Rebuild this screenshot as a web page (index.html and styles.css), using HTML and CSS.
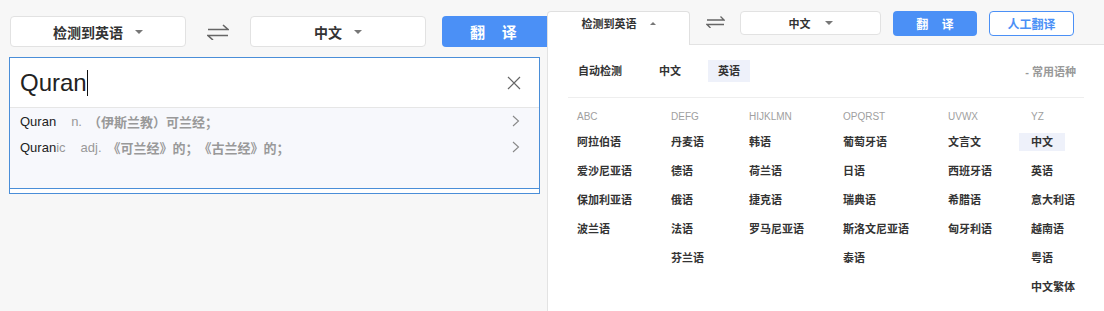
FILE: index.html
```html
<!DOCTYPE html>
<html lang="zh-CN">
<head>
    <meta charset="UTF-8">
    <meta name="viewport" content="width=device-width, initial-scale=1.0">
    <title>翻译</title>
    <link rel="stylesheet" href="styles.css">
</head>
<body>
    <div class="page">
        <!-- left: input side -->
        <div class="left">
            <div class="topbar">
                <div class="select">检测到英语 <span class="caret"></span></div>
                <div class="swap">
                    <svg width="22" height="16" viewBox="0 0 22 16"><path d="M1 5.5h20L16 1M21 11.5H1l5 4.5" fill="none" stroke="#666" stroke-width="1.6"/></svg>
                </div>
                <div class="select">中文 <span class="caret"></span></div>
                <button class="btn-main">翻&nbsp;&nbsp;&nbsp;&nbsp;译</button>
            </div>

            <div class="input-box">
                <div class="input-row">
                    <span class="input-text">Quran</span><span class="cursor"></span>
                    <svg class="close" width="14" height="14" viewBox="0 0 14 14"><path d="M1 1l12 12M13 1L1 13" stroke="#666" stroke-width="1.2"/></svg>
                </div>
                <div class="suggest">
                    <div class="suggest-row">
                        <span class="word">Quran</span>
                        <span class="pos">n.</span>
                        <span class="mean">（伊斯兰教）可兰经；</span>
                        <svg class="chev" width="8" height="12" viewBox="0 0 8 12"><path d="M1 1l5.5 5L1 11" fill="none" stroke="#888" stroke-width="1.1"/></svg>
                    </div>
                    <div class="suggest-row">
                        <span class="word">Quran<span class="rest">ic</span></span>
                        <span class="pos">adj.</span>
                        <span class="mean">《可兰经》的；《古兰经》的；</span>
                        <svg class="chev" width="8" height="12" viewBox="0 0 8 12"><path d="M1 1l5.5 5L1 11" fill="none" stroke="#888" stroke-width="1.1"/></svg>
                    </div>
                </div>
            </div>
        </div>

        <!-- right: language dropdown -->
        <div class="right">
            <div class="head">
                <div class="tab">检测到英语 <span class="caret up"></span></div>
                <div class="swap small">
                    <svg width="19" height="12" viewBox="0 0 19 12"><path d="M1 4h17L14.5 .5M18 8.5H1l3.5 3.5" fill="none" stroke="#666" stroke-width="1.3"/></svg>
                </div>
                <div class="select small-select">中文 <span class="caret"></span></div>
                <button class="btn-main small-btn">翻&nbsp;&nbsp;&nbsp;&nbsp;译</button>
                <button class="btn-line">人工翻译</button>
            </div>

            <div class="panel">
                <div class="tabs">
                    <span class="chip">自动检测</span>
                    <span class="chip">中文</span>
                    <span class="chip active">英语</span>
                    <span class="common">- 常用语种</span>
                </div>
                <div class="divider"></div>

                <div class="lang-grid">
                    <div class="col">
                        <div class="col-title">ABC</div>
                        <div class="lang"><span>阿拉伯语</span></div>
                        <div class="lang"><span>爱沙尼亚语</span></div>
                        <div class="lang"><span>保加利亚语</span></div>
                        <div class="lang"><span>波兰语</span></div>
                    </div>
                    <div class="col">
                        <div class="col-title">DEFG</div>
                        <div class="lang"><span>丹麦语</span></div>
                        <div class="lang"><span>德语</span></div>
                        <div class="lang"><span>俄语</span></div>
                        <div class="lang"><span>法语</span></div>
                        <div class="lang"><span>芬兰语</span></div>
                    </div>
                    <div class="col">
                        <div class="col-title">HIJKLMN</div>
                        <div class="lang"><span>韩语</span></div>
                        <div class="lang"><span>荷兰语</span></div>
                        <div class="lang"><span>捷克语</span></div>
                        <div class="lang"><span>罗马尼亚语</span></div>
                    </div>
                    <div class="col">
                        <div class="col-title">OPQRST</div>
                        <div class="lang"><span>葡萄牙语</span></div>
                        <div class="lang"><span>日语</span></div>
                        <div class="lang"><span>瑞典语</span></div>
                        <div class="lang"><span>斯洛文尼亚语</span></div>
                        <div class="lang"><span>泰语</span></div>
                    </div>
                    <div class="col">
                        <div class="col-title">UVWX</div>
                        <div class="lang"><span>文言文</span></div>
                        <div class="lang"><span>西班牙语</span></div>
                        <div class="lang"><span>希腊语</span></div>
                        <div class="lang"><span>匈牙利语</span></div>
                    </div>
                    <div class="col">
                        <div class="col-title">YZ</div>
                        <div class="lang"><span class="picked">中文</span></div>
                        <div class="lang"><span>英语</span></div>
                        <div class="lang"><span>意大利语</span></div>
                        <div class="lang"><span>越南语</span></div>
                        <div class="lang"><span>粤语</span></div>
                        <div class="lang"><span>中文繁体</span></div>
                    </div>
                </div>
            </div>
        </div>
    </div>
</body>
</html>
```

FILE: styles.css
```css
body {
    margin: 0;
    background: #f7f7f7;
    font-family: "Liberation Sans", "Noto Sans CJK SC", sans-serif;
    color: #333;
    overflow: hidden;
}

.page {
    display: flex;
    height: 311px;
}

/* left side */
.left {
    width: 547px;
    flex-shrink: 0;
    overflow: hidden;
}

.topbar {
    display: flex;
    align-items: center;
    padding: 16px 0 0 10px;
}

.topbar > * {
    flex-shrink: 0;
}

.select {
    width: 176px;
    height: 31px;
    box-sizing: border-box;
    background: white;
    border: 1px solid #e2e2e2;
    border-radius: 4px;
    display: flex;
    align-items: center;
    justify-content: center;
    gap: 12px;
    font-size: 14px;
    font-weight: bold;
    color: #333;
}

.caret {
    width: 0;
    height: 0;
    border-left: 4px solid transparent;
    border-right: 4px solid transparent;
    border-top: 4px solid #777;
}

.caret.up {
    border-top: none;
    border-bottom: 3px solid #777;
    border-left-width: 3px;
    border-right-width: 3px;
}

.swap {
    width: 64px;
    display: flex;
    justify-content: center;
}

.btn-main {
    margin-left: 16px;
    width: 112px;
    height: 31px;
    border: none;
    border-radius: 4px;
    background: #4b90f6;
    color: white;
    font-family: inherit;
    font-size: 15px;
    font-weight: bold;
    text-align: left;
    padding-left: 28px;
}

.input-box {
    margin: 10px 0 0 9px;
    width: 531px;
    height: 137px;
    box-sizing: border-box;
    border: 1px solid #4a8ed8;
    background: white;
}

.input-row {
    height: 50px;
    box-sizing: border-box;
    border-bottom: 1px solid #e6e6e6;
    display: flex;
    align-items: center;
    padding: 0 18px 0 10px;
}

.input-text {
    font-size: 24px;
    color: #222;
}

.cursor {
    width: 1px;
    height: 26px;
    background: #111;
}

.close {
    margin-left: auto;
}

.suggest {
    height: 81px;
    box-sizing: border-box;
    background: #f7f8fc;
    border-bottom: 1px solid #4a8ed8;
}

.suggest-row {
    display: flex;
    align-items: center;
    height: 26px;
    padding: 0 19px 0 10px;
    font-size: 13px;
}

.word {
    color: #222;
    margin-right: 15px;
}

.word .rest {
    color: #999;
}

.pos {
    color: #999;
    margin-right: 6px;
}

.mean {
    color: #999;
    font-weight: bold;
    text-spacing-trim: space-all;
}

.chev {
    margin-left: auto;
}

/* right side */
.right {
    flex: 1;
    display: flex;
    flex-direction: column;
}

.head {
    height: 44px;
    box-sizing: border-box;
    padding-top: 11px;
    display: flex;
    align-items: flex-start;
}

.head > * {
    flex-shrink: 0;
}

.tab {
    width: 143px;
    height: 34px;
    box-sizing: border-box;
    background: white;
    border: 1px solid #e0e0e0;
    border-bottom: none;
    border-radius: 4px 4px 0 0;
    display: flex;
    justify-content: center;
    gap: 13px;
    padding-top: 3px;
    font-size: 11px;
    font-weight: bold;
    line-height: 18px;
    position: relative;
    z-index: 1;
}

.tab .caret {
    margin-top: 7px;
}

.swap.small {
    width: 50px;
    padding-top: 5px;
}

.small-select {
    width: 141px;
    height: 24px;
    font-size: 11px;
    gap: 14px;
}

.small-btn {
    margin-left: 12px;
    width: 84px;
    height: 25px;
    font-size: 12px;
    text-align: center;
    padding: 0;
}

.btn-line {
    margin-left: 12px;
    width: 85px;
    height: 25px;
    box-sizing: border-box;
    background: white;
    border: 1px solid #4b90f6;
    border-radius: 4px;
    color: #4b90f6;
    font-family: inherit;
    font-size: 12px;
    font-weight: bold;
}

.panel {
    flex: 1;
    background: white;
    border-top: 1px solid #e3e3e3;
    border-left: 1px solid #e3e3e3;
}

.tabs {
    display: flex;
    align-items: center;
    gap: 17px;
    margin-top: 15px;
    padding: 0 28px 0 20px;
    height: 22px;
    font-size: 11px;
    font-weight: bold;
}

.chip {
    padding: 0 10px;
    line-height: 22px;
}

.chip.active {
    background: #eef1fa;
}

.common {
    margin-left: auto;
    color: #999;
    font-size: 11px;
}

.divider {
    height: 1px;
    background: #eeeeee;
    margin: 15px 20px 0;
}

.lang-grid {
    display: grid;
    grid-template-columns: 94px 78px 94px 105px 83px 1fr;
    padding: 9px 0 0 29px;
}

.col-title {
    font-size: 10px;
    color: #a0a0a0;
    line-height: 20px;
}

.lang {
    height: 29px;
    display: flex;
    align-items: center;
    font-size: 11px;
    font-weight: bold;
}

.lang span {
    padding: 0 12px;
    margin-left: -12px;
    line-height: 18px;
}

.lang .picked {
    background: #eef1fa;
}
```
